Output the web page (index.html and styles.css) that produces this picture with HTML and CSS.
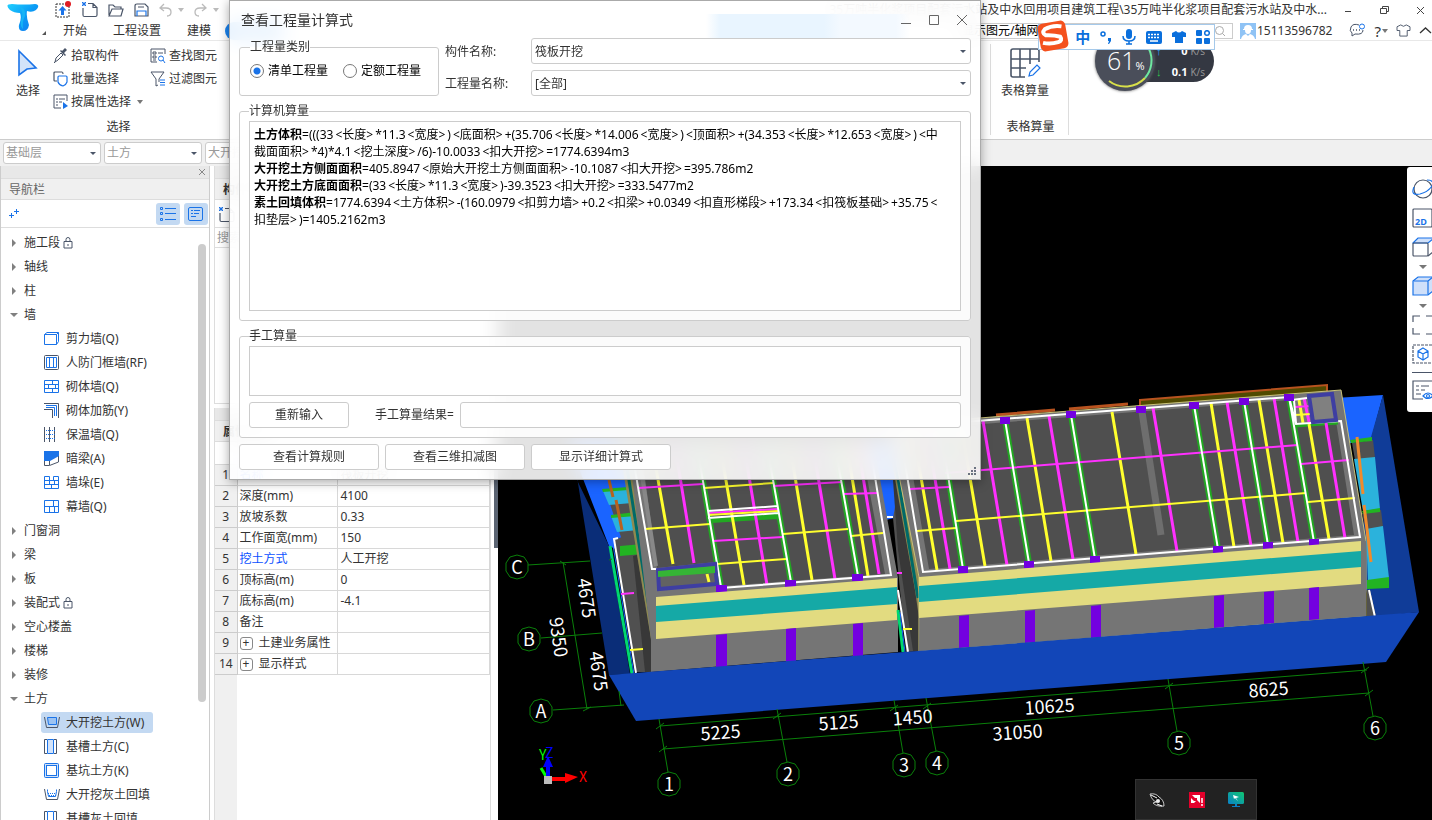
FILE: index.html
```html
<!DOCTYPE html>
<html lang="zh-CN">
<head>
<meta charset="utf-8">
<title>查看工程量计算式</title>
<link rel="stylesheet" href="styles.css">
</head>
<body>
<svg class="defs" aria-hidden="true">
  <symbol id="lock" viewBox="0 0 10 12"><path d="M1 4.500h8v6.500H1zM3 4.500V2.500a2 2 0 0 1 4 0v2M5 7v2" fill="none" stroke="#4a5568"/></symbol>
  <symbol id="newdoc" viewBox="0 0 16 16"><path d="M6 1.500h5l4 4V13q0 1.500-1.500 1.500h-11Q1 14.500 1 13V6M11 1.500v4h4" fill="none" stroke="#4a5568" stroke-width="1.200"/><path d="M0 0l4 4M4 0L0 4M2 0v4M0 2h4" stroke="#1a73e8"/></symbol>
  <symbol id="bubble" viewBox="-13 -13 26 26"><path d="M0-12L7-10 11-4V4L7 10 0 12-7 10-11 4V-4L-7-10Z" fill="none" stroke="#0a800a"/></symbol>
  <symbol id="shirt" viewBox="0 0 16 14"><path d="M5 1L1 3v4h3v6h8V7h3V3l-4-2Q8 4 5 1z"/></symbol>
</svg>
<div class="app">
  <header class="top">
    <div class="logo">
      <svg width="36" height="36" viewBox="0 0 36 36"><defs><linearGradient id="lg" x1="0" x2="1" y1="0" y2="1"><stop offset="0" stop-color="#20d0ff"/><stop offset=".5" stop-color="#0a9bf5"/><stop offset="1" stop-color="#1478f0"/></linearGradient></defs><path d="M6 5Q18 6 29 5q6 1 1 6-4 3-9 1-1 6 2 14-1 6-6 6t-4-6q3-7 1-12-6 0-10-3Q-2 5 6 5z" fill="url(#lg)"/><path d="M14 8q6 1 5 9-3 5-2 13-3-3-2-8 3-8-1-14z" fill="#17b4f5"/></svg>
      <i class="corner"></i>
    </div>
    <div class="top-main">
      <div class="title-row">
        <div class="quick">
          <button aria-label="升级"><svg width="18" height="18" viewBox="0 0 18 18"><rect x="2" y="3" width="13" height="13" fill="none" stroke="#333" stroke-dasharray="2 1"/><path d="M8.500 5l4 4.500H10V14H7V9.500H4.500z" fill="#1a73e8"/><circle cx="14" cy="3" r="3" fill="#e01b22"/></svg></button>
          <button aria-label="新建"><svg width="16" height="16"><use href="#newdoc"/></svg></button>
          <button aria-label="打开"><svg width="16" height="14" viewBox="0 0 16 14" fill="none" stroke="#4a5568" stroke-width="1.200"><path d="M1 12V2h4l2 2h6v2M1 13L4 6h11l-2 7z"/></svg></button>
          <button aria-label="保存"><svg width="15" height="14" viewBox="0 0 15 14" fill="none" stroke="#4a5568" stroke-width="1.200"><path d="M1 13V3q0-2 2-2h8l3 3v9zM4 4h6"/><path d="M3 13V8h9v5" stroke="#1a73e8"/></svg></button>
          <button class="dim" aria-label="撤销"><svg width="13" height="14" viewBox="0 0 13 14" fill="none" stroke="#bbb" stroke-width="1.300"><path d="M5 1L1 5l4 3M1 5h6q5 0 5 4t-4 4"/></svg><i class="caret"></i></button>
          <button class="dim" aria-label="重做"><svg width="13" height="14" viewBox="0 0 13 14" fill="none" stroke="#bbb" stroke-width="1.300"><path d="M8 1l4 4-4 3M12 5H6Q1 5 1 9t4 4"/></svg><i class="caret"></i></button>
        </div>
        <div class="file-name"><span>35万吨半化浆项目配套污水站及中水回用项目建筑工程\35万吨半化浆项目配套污水站及中水...</span></div>
        <div class="win">
          <button aria-label="最小化"><svg width="9" height="9"><path d="M1 5.500h6" stroke="#444"/></svg></button>
          <button aria-label="还原"><svg width="9" height="9" fill="none" stroke="#444"><path d="M2.500 2.500v-2h6v5h-2M.5 2.500h6v5h-6z"/></svg></button>
          <button aria-label="关闭"><svg width="9" height="9" stroke="#444"><path d="M1 1l7 7M8 1L1 8"/></svg></button>
        </div>
      </div>
      <div class="menu-row">
        <nav class="tabs"><a href="#">开始</a><a href="#">工程设置</a><a href="#">建模</a><a href="#" class="on" aria-label="工程量"></a></nav>
        <div class="find"><input aria-label="搜索" value="显示图元/轴网右键"><svg width="12" height="12" viewBox="0 0 12 12" fill="none" stroke="#aaa"><circle cx="5.500" cy="5.500" r="4"/><path d="M8.500 8.500L11 11"/></svg></div>
        <div class="user"><svg width="16" height="16" viewBox="0 0 16 16"><path fill="#8fc3f5" d="M0 0h16v16H0z"/><path fill="#fff" d="M4 6q0-4 4-4t4 4h1v1H3V6zM5 7h6q0 4-3 4T5 7zM1 16q1-4 5-5l2 2 2-2q4 1 5 5z"/></svg>15113596782</div>
        <div class="tools">
          <button aria-label="消息"><svg width="17" height="15" viewBox="0 0 17 15" fill="none" stroke="#4a5568"><path d="M10 2Q4 0 2 4q-2 4 1 6v3l3-2q8 1 8-4"/><path d="M4 7h1M7 7h1M10 7h1" stroke-width="1.500"/><circle cx="13" cy="3.500" r="2.500" stroke="#1a73e8"/></svg></button>
          <button aria-label="帮助">?<i class="caret"></i></button>
          <button aria-label="皮肤"><svg width="15" height="13" fill="none" stroke="#4a5568"><use href="#shirt"/></svg></button>
          <button aria-label="收起"><svg width="13" height="9" fill="none" stroke="#333" stroke-width="1.300"><path d="M1 7l5.500-5L12 7"/></svg></button>
        </div>
      </div>
    </div>
  </header>

  <section class="ribbon">
    <div class="group first">
      <div class="group-body">
        <button class="big"><svg width="22" height="28" viewBox="0 0 22 28"><path d="M2 2l17 17-9 1-8 6z" fill="#d3e3f9" stroke="#1a73e8" stroke-width="1.600"/></svg>选择</button>
        <div class="stack">
          <button><svg width="15" height="16" viewBox="0 0 15 16"><path d="M2 14l1-4 5-5 2 2-5 5zM1 15l1-1" fill="none" stroke="#4a5568"/><path d="M7 3l5 5 1-1-2-2 3-3-2-2-3 3-1-1z" fill="#4a5568"/></svg>拾取构件</button>
          <button><svg width="15" height="16" viewBox="0 0 15 16" fill="none" stroke-width="1.200"><path d="M4 10H2Q1 10 1 9V2q0-1 1-1h7q1 0 1 2" stroke="#4a5568"/><path d="M5 6q0-1 1-1h7q1 0 1 1v5q-1 3-4 4-4-1-5-4z" stroke="#1a73e8"/></svg>批量选择</button>
          <button><svg width="15" height="16" viewBox="0 0 15 16" fill="none" stroke="#4a5568"><path d="M8 14H1V1h13v6M3 5h2M6 5h6M3 8h2M6 8h3M3 11h2"/><path d="M10 8l5 4-5 3z" fill="#1a73e8" stroke="none"/></svg>按属性选择<i class="caret"></i></button>
        </div>
        <div class="stack">
          <button><svg width="16" height="16" viewBox="0 0 16 16" fill="none" stroke="#4a5568"><path d="M7 14H1V1h14v5M3 4h3v2H3zM8 5h5M3 8h3v2H3zM3 12h3"/><g stroke="#1a73e8"><circle cx="11" cy="10.500" r="2.500"/><path d="M13 12l2 3"/></g></svg>查找图元</button>
          <button><svg width="16" height="16" viewBox="0 0 16 16" fill="none" stroke="#4a5568"><path d="M1 1h13L9 8v3M1 1l5 7v7l2-1"/><path d="M10 9h5M10 11.500h5M10 14h5" stroke="#1a73e8"/></svg>过滤图元</button>
        </div>
      </div>
      <p>选择</p>
    </div>
    <div class="group table-calc">
      <button class="big"><svg width="32" height="32" viewBox="0 0 32 32" fill="none" stroke="#4a5568" stroke-width="1.600"><path d="M16 30H4q-2 0-2-2V4q0-2 2-2h24q2 0 2 2v11M2 12h28M2 21h15M11 2v28M21 2v15"/><path d="M20 29l1-4 7-7 3 3-7 7z" stroke="#1a73e8" stroke-width="1.200"/></svg>表格算量</button>
      <p>表格算量</p>
    </div>
  </section>

  <section class="filters">
    <label class="combo"><select aria-label="楼层"><option>基础层</option></select></label>
    <label class="combo"><select aria-label="类别"><option>土方</option></select></label>
    <label class="combo"><select aria-label="构件类型"><option>大开挖土方</option></select></label>
  </section>

  <main class="work">
    <aside class="nav">
      <div class="strip"><button aria-label="关闭导航栏"><svg width="8" height="8" stroke="#888"><path d="M1 1l6 6M7 1L1 7"/></svg></button></div>
      <h2>导航栏</h2>
      <div class="nav-tools">
        <button aria-label="展开"><svg width="10" height="11" stroke="#1a73e8"><path d="M0 7.500h5M2.500 5v5M5 3.500h5M7.500 1v5"/></svg></button>
        <button class="chip" aria-label="列表"><svg width="16" height="14" viewBox="0 0 16 14" stroke="#1a73e8" fill="none"><path d="M5 1.500h11M5 6.500h11M5 12.500h11M.5.5h2v2h-2zM.5 5.500h2v2h-2zM.5 11.500h2v2h-2z"/></svg></button>
        <button class="chip" aria-label="详情"><svg width="16" height="14" viewBox="0 0 16 14" stroke="#1a73e8" fill="none"><rect x=".5" y=".5" width="14" height="13" rx="1.500"/><path d="M3 3.500h2M6 3.500h6M3 6.500h2M6 6.500h5M3 9.500h5"/></svg></button>
      </div>
      <ul class="tree">
        <li><button><i></i>施工段<svg class="lk"><use href="#lock"/></svg></button></li>
        <li><button><i></i>轴线</button></li>
        <li><button><i></i>柱</button></li>
        <li><button class="open"><i></i>墙</button>
          <ul>
            <li><button><svg viewBox="0 0 16 16"><path d="M.5 3.500h12v10H.5zM.5 3.500L3 1.500h11.500v9l-2 3M12.500 3.500l2-2" class="b"/></svg>剪力墙(Q)</button></li>
            <li><button><svg viewBox="0 0 16 16"><rect x=".5" y=".5" width="14" height="14" rx="1" class="g"/><path d="M2.500 2.500h10v10h-10zM5.500 2.500v10M9.500 2.500v10" class="b"/></svg>人防门框墙(RF)</button></li>
            <li><button><svg viewBox="0 0 16 16"><path d="M.5 1.500h14v12H.5zM.5 5.500h14M.5 9.500h14M8.500 1.500v4M4.500 5.500v4M11.500 5.500v4M8.500 9.500v4" class="b"/></svg>砌体墙(Q)</button></li>
            <li><button><svg viewBox="0 0 16 16"><path d="M0 .5h14.500V15M0 6.500h8.500V15" class="g"/><path d="M2 2.500h10.500V13M2 4.500h8.500V13" class="b"/></svg>砌体加筋(Y)</button></li>
            <li><button><svg viewBox="0 0 16 16"><path d="M.5 0v15M5.500 0v15M10.500 0v15" class="g"/><path d="M2 3.500h9M2 7.500h9M2 11.500h9" class="b" stroke-dasharray="1 1"/></svg>保温墙(Q)</button></li>
            <li><button><svg viewBox="0 0 16 16"><path d="M.5 10v4.500h5l9-3.500V5M5.500 10v4" class="g"/><path d="M0 0h15v5l-9 5H0z" fill="#1a73e8"/></svg>暗梁(A)</button></li>
            <li><button><svg viewBox="0 0 16 16"><path d="M.5 1.500h5v4h4v-4h5v12H.5zM.5 5.500h14M.5 9.500h14M5.500 5.500v4M10.500 5.500v4M7.500 9.500v4" class="b"/></svg>墙垛(E)</button></li>
            <li><button><svg viewBox="0 0 16 16"><path d="M.5 1.500h14v12H.5zM.5 7.500h14M9.500 1.500v6M5.500 7.500v6M10.500 7.500v6" class="b"/></svg>幕墙(Q)</button></li>
          </ul>
        </li>
        <li><button><i></i>门窗洞</button></li>
        <li><button><i></i>梁</button></li>
        <li><button><i></i>板</button></li>
        <li><button><i></i>装配式<svg class="lk"><use href="#lock"/></svg></button></li>
        <li><button><i></i>空心楼盖</button></li>
        <li><button><i></i>楼梯</button></li>
        <li><button><i></i>装修</button></li>
        <li><button class="open"><i></i>土方</button>
          <ul>
            <li><button class="sel"><svg viewBox="0 0 16 16"><path d="M.5 2l2 10.500h11L15.500 2" class="g"/><path d="M3.500 2.500h9v7h-8z" class="b fill"/></svg>大开挖土方(W)</button></li>
            <li><button><svg viewBox="0 0 16 16"><path d="M3 .5H.5v14H3M10 .5h2.500v14H10" class="g"/><path d="M3.500.5h6v14h-6z" class="b light"/></svg>基槽土方(C)</button></li>
            <li><button><svg viewBox="0 0 16 16"><rect x=".5" y=".5" width="14" height="14" rx="1" class="b light"/><rect x="2.500" y="2.500" width="10" height="10" class="b white"/></svg>基坑土方(K)</button></li>
            <li><button><svg viewBox="0 0 16 16"><path d="M.5 2l2 10.500h11L15.500 2" class="g"/><path d="M3.500 2.500v2l1 5h7l1-5v-2" class="b"/><path d="M4 6.500h8M5 8.500h7" class="b" stroke-dasharray="1 1"/></svg>大开挖灰土回填</button></li>
            <li><button><svg viewBox="0 0 16 16"><path d="M3 .5H.5v14H3M10 .5h2.500v14H10" class="g"/><path d="M3.500.5h6v14h-6z" class="b"/></svg>基槽灰土回填</button></li>
          </ul>
        </li>
      </ul>
      <span class="thumb"></span>
    </aside>

    <aside class="props">
      <div class="list">
        <div class="strip"></div>
        <h2>构件列表</h2>
        <div class="list-tools"><svg width="16" height="16"><use href="#newdoc"/></svg></div>
        <input class="seek" type="text" aria-label="搜索构件" placeholder="搜索构件...">
      </div>
      <div class="attrs">
        <div class="strip"></div>
        <h2>属性列表</h2>
        <table>
          <colgroup><col class="c-num"><col class="c-name"><col></colgroup>
          <tbody>
            <tr class="blank"><td></td><td></td><td></td></tr>
            <tr><th>1</th><td class="key">名称</td><td>筏板开挖</td></tr>
            <tr><th>2</th><td>深度(mm)</td><td>4100</td></tr>
            <tr><th>3</th><td>放坡系数</td><td>0.33</td></tr>
            <tr><th>4</th><td>工作面宽(mm)</td><td>150</td></tr>
            <tr><th>5</th><td class="key">挖土方式</td><td>人工开挖</td></tr>
            <tr><th>6</th><td>顶标高(m)</td><td>0</td></tr>
            <tr><th>7</th><td>底标高(m)</td><td>-4.1</td></tr>
            <tr><th>8</th><td>备注</td><td></td></tr>
            <tr><th>9</th><td><button class="plus">+</button>土建业务属性</td><td></td></tr>
            <tr><th>14</th><td><button class="plus">+</button>显示样式</td><td></td></tr>
          </tbody>
        </table>
      </div>
    </aside>
    <div class="split"><i></i></div>

    <section class="view">
      <svg class="scene" viewBox="498 166 934 654" preserveAspectRatio="xMinYMin slice">
        <!-- excavation pit -->
        <path fill="#1a64ff" d="M568 440H900L898 517 886 520 640 560 609 546zM1335 398L1383 395 1371 440 1345 444z"/>
        <path fill="#0a2d78" d="M571 440L577 480 609 546 630 674 609 675z"/>
        <path fill="#103c98" d="M1383 395L1419 612 1372 617 1360 560 1371 437z"/>
        <!-- left yard -->
        <path fill="#505050" d="M614 540L640 530 646 540 651 560V672H635zM610 504L633 502 640 545 622 540z"/>
        <path d="M610 546L632 674" stroke="#00d870" stroke-width="3"/><path d="M613 545L634 674" stroke="#1a64ff" stroke-width="1"/>
        <path d="M618 538l-4 1L636 673" fill="none" stroke="#fff" stroke-width="2"/>
        <path fill="#2bb2dc" d="M603 491l26-2 3 14-23 2zM611 516l25-3 3 17-22 2z"/>
        <path fill="#22b422" d="M602 489l26-2v3l-25 2zM611 515l25-3v4l-25 2zM620 546l23-2v10l-23 2z"/>
        <path d="M609 480l4 17M616 500l6 30" stroke="#b8621f" stroke-width="3"/>
        <path fill="#383838" d="M633 556L637 555 651 638V672H645z"/>
        <path d="M621 594l13-1" stroke="#f3f" stroke-width="2"/><path d="M630 650l13-1" stroke="#ff3" stroke-width="2"/>
        <path fill="#8f8a50" d="M618 440H632L656 596 651 639z"/>
        <path d="M625 455L651 620" stroke="#006a68" stroke-width="3"/><path d="M630 455L653 600" stroke="#e2db80" stroke-width="1"/>
        <!-- left building -->
        <path fill="#757575" d="M628 440H873L898 578V652L651 672V640z"/>
        <path fill="#4f4f4f" d="M640 440H860L885 574 723 586 716 562 657 568z"/>
        <path fill="none" stroke="#888" stroke-width="4" d="M638 450L656 566"/>
        <g fill="none" stroke="#22a822" stroke-width="6"><path d="M696 440L721 587M766 440L791 582M834 440L858 576M711 520L777 516"/></g>
        <g fill="none" stroke="#ffff2e" stroke-width="3"><path d="M651 440L673 564M719 440L744 585M789 440L812 580M846 440L868 576"/></g>
        <g fill="none" stroke="#ff30ff" stroke-width="3"><path d="M674 440L694 563M743 440L767 585M812 440L835 579M857 440L879 574"/></g>
        <g fill="none" stroke="#ff30ff" stroke-width="2"><path d="M638 488L703 484M773 486L842 482M843 494L878 493M713 541L783 537M708 513L778 509"/></g>
        <g fill="none" stroke="#ffff2e" stroke-width="2"><path d="M704 488L773 483M645 529L710 524M717 564L786 559M783 534L848 529M851 536L883 533M708 515L778 511"/></g>
        <g fill="none" stroke="#fff" stroke-width="2"><path d="M696 440L721 587M766 440L791 582M834 440L858 576M708 511L778 506M708 518L778 513M630 440L652 569H658M869 440L891 575 721 588"/></g>
        <path d="M658 570L715 564 717 584 659 589z" fill="#626262" stroke="#3e3ea2" stroke-width="4"/><path fill="#35b535" d="M658 571l57-5v7l-57 4z"/><path d="M707 574l2 8" stroke="#ff3" stroke-width="3"/>
        <path fill="#7300e0" d="M716 585h11v7h-11zM785 580h11v7h-11zM852 574h11v7h-11z"/>
        <path fill="#e2db80" d="M656 597L897 578V620L656 639z"/><path fill="#15a9a6" d="M656 606L897 587V604L656 622z"/>
        <path fill="#7300e0" d="M716 635l11-1v33l-11 1zM786 629l10-1v33l-10 1zM853 624l10-1v33l-10 1z"/>
        <!-- passage between buildings -->
        <path fill="#505050" d="M893 518L900 480 919 620V651L906 652z"/><path fill="#383838" d="M893 480H902L919 610V651H913L898 550z"/>
        <path d="M898 610L903 652" stroke="#00d870" stroke-width="3"/><path d="M900 612L905 652" stroke="#1a64ff"/><path d="M898 590L908 652M887 517L893 517" stroke="#fff" stroke-width="2"/>
        <path fill="#8f8a50" d="M888 440H899L919 577V618L915 590z"/><path d="M895 460L918 598" stroke="#006a68" stroke-width="3"/>
        <path d="M897 573h5" stroke="#f3f" stroke-width="2"/><path d="M903 629h9" stroke="#ff3" stroke-width="2"/>
        <!-- right building -->
        <path fill="none" stroke="#b8531f" stroke-width="3" d="M996 415L1055 410M1069 409L1128 404"/>
        <path fill="#504a00" stroke="#b8531f" stroke-width="2" d="M1140 400L1327 385V396L1140 408z"/>
        <path fill="#757575" stroke="#c8c27a" d="M889 425L1341 390 1366 541V616L919 651V577z"/>
        <path fill="#757575" d="M920 577L1361 542 1366 541V616L919 651z"/>
        <path fill="#4f4f4f" d="M905 430L1289 400 1295 424 1336 421 1354 535 929 569z"/>
        <path d="M1142 412L1161 535" stroke="#6e6e6e" stroke-width="7"/>
        <g fill="none" stroke="#22a822" stroke-width="6"><path d="M940 425L963 569M1005 420L1029 563M1071 415L1095 559M1194 405L1218 549M1244 401L1268 545M1289 397L1314 542"/></g>
        <path d="M1295 426L1338 423" stroke="#22a822" stroke-width="3"/>
        <g fill="none" stroke="#ffff2e" stroke-width="3"><path d="M912 425L937 570M961 425L985 566M1027 418L1051 561M1112 412L1136 554M1211 403L1234 547M1259 400L1283 543M1309 424L1329 539M1299 400L1303 423"/></g>
        <g fill="none" stroke="#ff30ff" stroke-width="3"><path d="M926 425L950 569M983 421L1007 565M1049 416L1073 559M1153 408L1177 551M1227 402L1251 546M1274 398L1298 542M1326 423L1345 538M1304 398L1309 422"/></g>
        <g fill="none" stroke="#ff30ff" stroke-width="2"><path d="M945 473L1298 445M910 489L949 487M1301 464L1349 460M1295 407L1310 406"/></g>
        <g fill="none" stroke="#ffff2e" stroke-width="2"><path d="M956 521L1306 493M917 531L956 528M1308 502L1355 498M1295 415L1311 414"/></g>
        <g fill="none" stroke="#fff" stroke-width="2"><path d="M940 425L963 569M1005 420L1029 563M1071 415L1095 559M1194 405L1218 549M1244 401L1268 545M1289 397L1314 542M899 427L1289 397 1296 424 1341 421 1360 537 923 572zM1292 400L1307 398M1296 423L1294 400"/></g>
        <path d="M1309 396L1332 394 1336 420 1313 422z" fill="#808080" stroke="#3e3ea2" stroke-width="4"/>
        <g fill="#7300e0"><path d="M1000 417h10v7h-10zM1066 411h10v7h-10zM1136 406h10v7h-10zM1189 402h10v7h-10zM1239 398h10v7h-10zM1284 394h10v7h-10z"/><path d="M958 566h10v7h-10zM1024 561h10v7h-10zM1090 556h10v7h-10zM1213 546h10v7h-10zM1263 542h10v7h-10zM1309 539h10v7h-10z"/></g>
        <path fill="#e2db80" d="M919 577L1361 541V584L919 618z"/><path fill="#15a9a6" d="M919 586L1361 551V567L919 602z"/>
        <path fill="#7300e0" d="M959 616l10-1v32l-10 1zM1025 611l10-1v32l-10 1zM1091 606l10-1v32l-10 1zM1214 596l10-1v32l-10 1zM1264 592l10-1v32l-10 1zM1309 588l10-1v32l-10 1z"/>
        <!-- right yard -->
        <path fill="#505050" d="M1352 443L1373 440 1375 458 1355 460zM1362 513L1381 510 1383 527 1366 530zM1367 590h3l6 26-9 1z"/>
        <path fill="#2bb2dc" d="M1354 459L1375 457 1380 509 1363 511zM1366 529L1383 526 1389 578 1368 581z"/>
        <path fill="#22b422" d="M1350 440l22-3v4l-21 2zM1362 511l18-3v4l-17 2zM1367 580l22-3v11l-22 1z"/>
        <path d="M1357 437L1363 494M1364 505L1371 562" stroke="#f08a2c" stroke-width="3"/><path d="M1369 590L1375 617" stroke="#fff" stroke-width="2"/>
        <path fill="#1246b8" d="M609 675L1419 612 1386 662 636 721z"/>
        <!-- axis grid -->
        <path fill="none" stroke="#0a800a" d="M528 565L590 561M609 560L612 559M541 638L602 633M553 710L624 705M563 562L587 709M619 691L621 706M660 726L1367 670M663 749L1369 693M659 719L668 772M777 709L787 762M894 700L903 753M926 698L936 751M1168 679L1177 731M1363 662L1373 716M560 561l6 4M583 711l8-4M656 729l8-6M773 719l8-6M890 711l8-6M923 709l8-6M1165 689l8-6M1361 673l8-6M659 752l8-6M1365 696l8-6"/>
        <g><use href="#bubble" x="504" y="554" width="26" height="26"/><use href="#bubble" x="516" y="626" width="26" height="26"/><use href="#bubble" x="528" y="698" width="26" height="26"/><use href="#bubble" x="656" y="771" width="26" height="26"/><use href="#bubble" x="775" y="761" width="26" height="26"/><use href="#bubble" x="891" y="752" width="26" height="26"/><use href="#bubble" x="924" y="750" width="26" height="26"/><use href="#bubble" x="1166" y="730" width="26" height="26"/><use href="#bubble" x="1362" y="715" width="26" height="26"/></g>
        <g class="dim-text">
          <text x="517" y="574">C</text><text x="529" y="646">B</text><text x="541" y="718">A</text><text x="669" y="791">1</text><text x="788" y="781">2</text><text x="904" y="772">3</text><text x="937" y="770">4</text><text x="1179" y="750">5</text><text x="1375" y="735">6</text>
          <text transform="translate(721 739) rotate(-4)">5225</text><text transform="translate(839 729) rotate(-4)">5125</text><text transform="translate(913 724) rotate(-4)">1450</text><text transform="translate(1050 713) rotate(-4)">10625</text><text transform="translate(1269 696) rotate(-4)">8625</text><text transform="translate(1018 739) rotate(-4)">31050</text>
          <text transform="translate(580 599) rotate(82)">4675</text><text transform="translate(552 638) rotate(82)">9350</text><text transform="translate(592 672) rotate(82)">4675</text>
        </g>
        <path d="M547 778L541 768" stroke="#0f0" stroke-width="3"/><path d="M551 779h16" stroke="#f00" stroke-width="4"/><path d="M565 773l13 4-13 6z" fill="#f00"/><path d="M548 777v-12" stroke="#00f" stroke-width="4"/><path d="M543 767l5-11 5 11z" fill="#00f"/><path d="M544 776h8v8h-8z" fill="#bbb"/>
        <g class="axis"><text x="579" y="782" fill="#f00">X</text><text x="539" y="760" fill="#0f0">Y</text><text x="545" y="758" fill="#00f">Z</text></g>
      </svg>
      <div class="view-tools">
        <button aria-label="动态观察"><svg width="22" height="20" viewBox="0 0 22 20" fill="none" stroke="#4a5568" stroke-width="1.200"><circle cx="11" cy="10" r="9"/><path d="M2 8q-4 9 6 7 8-2 12-8 3-6-5-6" stroke="#1a73e8"/></svg></button>
        <button aria-label="二维"><svg width="22" height="20" viewBox="0 0 22 20" fill="none" stroke="#4a5568" stroke-width="1.200"><rect x="1" y="1" width="19" height="18" rx="1"/><text x="3" y="17" class="t2d">2D</text></svg></button>
        <button aria-label="俯视"><svg width="22" height="20" viewBox="0 0 22 20" fill="none" stroke="#4a5568" stroke-width="1.200"><path d="M1 6l5-5h16l-6 5z" fill="#cfe0fa" stroke="#1a73e8"/><rect x="1" y="6" width="15" height="13" rx="1"/><path d="M16 19l6-5"/></svg></button><i class="caret"></i>
        <button aria-label="着色"><svg width="22" height="20" viewBox="0 0 22 20" fill="#cfe0fa" stroke="#1a73e8" stroke-width="1.200"><path d="M1 5l5-4h16v13l-6 5H1z"/><path d="M1 5h15v14M16 5l5-4"/></svg></button><i class="caret"></i>
        <button aria-label="全屏"><svg width="22" height="20" viewBox="0 0 22 20" fill="none" stroke="#4a5568" stroke-width="1.200"><path d="M8 1H1v6M14 1h8M1 13v6h7M14 19h8"/></svg></button>
        <button aria-label="局部三维"><svg width="22" height="20" viewBox="0 0 22 20" fill="none" stroke="#4a5568" stroke-width="1.200"><rect x="1" y="1" width="20" height="18" stroke-dasharray="3 1"/><path d="M11 4l5 3v6l-5 3-5-3V7zM6 7l5 3 5-3M11 10v6" stroke="#1a73e8"/></svg></button>
        <hr>
        <button aria-label="显示设置"><svg width="22" height="22" viewBox="0 0 22 22" fill="none" stroke="#4a5568" stroke-width="1.200"><path d="M11 20H1V2h21M4 7h3M9 7h8M4 11h3M9 11h4M4 15h5"/><path d="M11 17q5-6 10 0-5 5-10 0z" stroke="#1a73e8"/><circle cx="16" cy="17" r="1.500" stroke="#1a73e8"/></svg></button>
      </div>
    </section>
  </main>
</div>

<div class="perf">
  <div class="rates"><span><b class="up">↑</b>0<small>K/s</small></span><span><b class="down">↓</b>0.1<small>K/s</small></span></div>
  <div class="dial"><svg width="60" height="60" viewBox="0 0 60 60"><path d="M54 18A27 27 0 0 1 50 47" fill="none" stroke="#6ee8a0" stroke-width="2"/><path d="M50 47A27 27 0 0 1 14 50" fill="none" stroke="#d8e04a" stroke-width="2"/></svg><span>61<small>%</small></span></div>
</div>

<div class="ime">
  <svg class="sogou" width="32" height="32" viewBox="0 0 32 32"><g transform="rotate(-10 16 16)"><rect x="2" y="2" width="28" height="28" rx="5" fill="#f4511e"/><path d="M26 8Q17 5 9 8q-4 3 0 6 8 1 14 4 2 4-3 5-8 1-15-2" fill="none" stroke="#fff" stroke-width="4"/></g></svg>
  <button class="zh">中</button>
  <button aria-label="标点"><svg width="14" height="14"><circle cx="4" cy="4" r="2" fill="none" stroke="#0a6fdc" stroke-width="1.500"/><path d="M9 8h3v3l-2 3H9l1-3H9z" fill="#0a6fdc"/></svg></button>
  <button aria-label="语音"><svg width="14" height="16" fill="#0a6fdc"><rect x="4" y="0" width="6" height="10" rx="3"/><path d="M1 7q0 5 6 5t6-5M7 12v3M4 15h6" fill="none" stroke="#0a6fdc" stroke-width="1.500"/></svg></button>
  <button aria-label="键盘"><svg width="16" height="13"><rect width="16" height="13" rx="2" fill="#0a6fdc"/><path d="M2 3.500h12M2 6.500h12" stroke="#fff" stroke-width="1.500" stroke-dasharray="2 1"/><path d="M4 10h8" stroke="#fff" stroke-width="1.500"/></svg></button>
  <button aria-label="皮肤盒子"><svg width="16" height="14" fill="#0a6fdc"><use href="#shirt"/></svg></button>
  <button aria-label="工具箱"><svg width="14" height="14" fill="#0a6fdc"><rect width="6" height="6" rx="1"/><rect y="8" width="6" height="6" rx="1"/><rect x="8" y="8" width="6" height="6" rx="1"/><circle cx="11" cy="3" r="2.300" fill="none" stroke="#0a6fdc" stroke-width="1.500"/></svg></button>
</div>

<div class="tray">
  <svg width="18" height="18" viewBox="0 0 18 18"><path d="M2 3q6-1 9 3 5 3 5 9-7 1-11-3 2-1 4-1-5-1-7-8z" fill="#111" stroke="#ccc"/><circle cx="10" cy="10" r="2" fill="#eee"/><path d="M3 4l6 3M9 13l5 2" stroke="#fff"/></svg>
  <svg width="16" height="16" viewBox="0 0 16 16"><path fill="#e4002b" d="M0 0h16v16H0z"/><path fill="#fff" d="M3 3h8v8L8 8V6H6zM2 6l3 3h2l-2 2H2z"/><path d="M13 6v5M13 12v2" stroke="#fff" stroke-width="1.500"/></svg>
  <svg width="16" height="16" viewBox="0 0 16 16"><defs><linearGradient id="mg" x1="0" y1="1" x2="1" y2="0"><stop stop-color="#0a80c8"/><stop offset="1" stop-color="#10c870"/></linearGradient></defs><rect width="16" height="12" rx="1.500" fill="url(#mg)"/><path d="M7 12h2v2h3v1H4v-1h3z" fill="#0a80c8"/><path d="M5 3l6 2-3 1 2 3-3-3-1 1z" fill="#fff"/></svg>
</div>

<section class="dialog" role="dialog" aria-labelledby="dlg-title">
  <header>
    <h1 id="dlg-title">查看工程量计算式</h1>
    <button aria-label="最小化"><svg width="12" height="12" stroke="#666"><path d="M1 9.500h10"/></svg></button>
    <button aria-label="最大化"><svg width="12" height="12" stroke="#666" fill="none"><path d="M1.500 1.500h9v9h-9z"/></svg></button>
    <button aria-label="关闭"><svg width="12" height="12" stroke="#666"><path d="M1 1l10 10M11 1L1 11"/></svg></button>
  </header>
  <div class="criteria">
    <fieldset class="kind">
      <legend>工程量类别</legend>
      <label><input type="radio" name="kind" checked>清单工程量</label>
      <label><input type="radio" name="kind">定额工程量</label>
    </fieldset>
    <div class="fields">
      <label for="comp">构件名称:</label><div class="combo"><select id="comp"><option>筏板开挖</option></select></div>
      <label for="qty">工程量名称:</label><div class="combo"><select id="qty"><option>[全部]</option></select></div>
    </div>
  </div>
  <fieldset class="computed">
    <legend>计算机算量</legend>
    <div class="result">
      <p><b>土方体积</b>=(((33<span>&lt;长度&gt;</span>*11.3<span>&lt;宽度&gt;</span>)<span>&lt;底面积&gt;</span>+(35.706<span>&lt;长度&gt;</span>*14.006<span>&lt;宽度&gt;</span>)<span>&lt;顶面积&gt;</span>+(34.353<span>&lt;长度&gt;</span>*12.653<span>&lt;宽度&gt;</span>)<span>&lt;中<br>截面面积&gt;</span>*4)*4.1<span>&lt;挖土深度&gt;</span>/6)-10.0033<span>&lt;扣大开挖&gt;</span>=1774.6394m3</p>
      <p><b>大开挖土方侧面面积</b>=405.8947<span>&lt;原始大开挖土方侧面面积&gt;</span>-10.1087<span>&lt;扣大开挖&gt;</span>=395.786m2</p>
      <p><b>大开挖土方底面面积</b>=(33<span>&lt;长度&gt;</span>*11.3<span>&lt;宽度&gt;</span>)-39.3523<span>&lt;扣大开挖&gt;</span>=333.5477m2</p>
      <p><b>素土回填体积</b>=1774.6394<span>&lt;土方体积&gt;</span>-(160.0979<span>&lt;扣剪力墙&gt;</span>+0.2<span>&lt;扣梁&gt;</span>+0.0349<span>&lt;扣直形梯段&gt;</span>+173.34<span>&lt;扣筏板基础&gt;</span>+35.75<span>&lt;<br>扣垫层&gt;</span>)=1405.2162m3</p>
    </div>
  </fieldset>
  <fieldset class="by-hand">
    <legend>手工算量</legend>
    <textarea aria-label="手工算量"></textarea>
    <div class="manual"><button class="btn">重新输入</button><label for="res">手工算量结果=</label><input id="res" type="text"></div>
  </fieldset>
  <footer><button class="btn">查看计算规则</button><button class="btn">查看三维扣减图</button><button class="btn">显示详细计算式</button></footer>
  <svg class="grip" width="9" height="9" fill="#6b7280"><path d="M6 0h2v2H6zM3 3h2v2H3zM6 3h2v2H6zM0 6h2v2H0zM3 6h2v2H3zM6 6h2v2H6z"/></svg>
</section>
</body>
</html>
```
FILE: styles.css
```css
* { box-sizing: border-box; }
body {
  margin: 0;
  height: 100vh;
  overflow: hidden;
  position: relative;
  font: 12px/16px "Noto Sans", "Noto Sans CJK SC", sans-serif;
  color: #333;
  background: #fff;
}
button, input, select, textarea { font: inherit; color: inherit; }
button { background: none; border: 0; padding: 0; display: flex; align-items: center; }
h1, h2, p, ul { margin: 0; padding: 0; font-weight: normal; }
ul { list-style: none; }
a { color: inherit; text-decoration: none; }
svg { flex: none; display: block; }
.defs { position: absolute; width: 0; height: 0; }
.caret { border: 3px solid transparent; border-top: 4px solid #777; border-bottom: 0; width: 6px; }
.app { height: 100%; display: flex; flex-direction: column; }

/* title and menu */
.top { display: flex; height: 41px; border-bottom: 1px solid #e8e8e8; }
.logo { width: 46px; display: flex; align-items: flex-end; padding: 0 0 5px 6px; }
.corner { border-left: 4px solid transparent; border-bottom: 4px solid #555; }
.top-main { flex: 1; min-width: 0; display: flex; flex-direction: column; }
.title-row { display: flex; height: 21px; align-items: center; }
.quick { display: flex; gap: 10px; padding-left: 8px; }
.quick .dim { gap: 6px; }
.quick .caret { border-top-color: #bbb; }
.file-name { flex: 1; min-width: 0; display: flex; justify-content: flex-end; overflow: hidden; white-space: nowrap; }
.win { display: flex; gap: 27px; padding: 0 7px 0 17px; }
.menu-row { display: flex; height: 20px; padding-top: 1px; align-items: center; }
.tabs { flex: 1; display: flex; gap: 26px; padding-left: 17px; align-items: center; }
.tabs .on { width: 60px; height: 18px; border-radius: 9px; background: #1a84f0; margin-left: -12px; }
.find { display: flex; align-items: center; border: 1px solid #ccc; height: 16px; width: 272px; padding-right: 6px; }
.find input { border: 0; flex: 1; min-width: 0; height: 14px; padding: 0; outline: 0; color: #000; }
.user { display: flex; align-items: center; gap: 1px; padding-left: 7px; }
.tools { display: flex; align-items: center; gap: 8px; padding-left: 17px; }
.tools button { font-size: 15px; gap: 1px; }

/* ribbon */
.ribbon { display: flex; justify-content: space-between; height: 98px; }
.group { display: flex; flex-direction: column; justify-content: space-between; padding-bottom: 4px; }
.group p { text-align: center; }
.group-body { display: flex; padding: 4px 20px 0 16px; }
.big { flex-direction: column; gap: 6px; }
.first .big { padding-top: 4px; align-self: flex-start; }
.stack { display: flex; flex-direction: column; gap: 7px; padding: 3px 0 0 13px; }
.stack + .stack { padding-left: 7px; }
.stack button { gap: 3px; height: 16px; }
.stack .caret { margin-left: 3px; }
.table-calc { margin: 3px 363px 4px 0; width: 79px; border: solid #ddd; border-width: 0 1px; padding-bottom: 0; }
.table-calc .big { padding: 3px 8px 0 10px; gap: 4px; align-self: flex-start; }
.table-calc p { padding: 0 0 0 2px; }

.filters { display: flex; gap: 3px; height: 27px; padding: 2px 3px; background: #f0f0f0; border-top: 1px solid #ccc; }
.combo { position: relative; }
.combo::after { content: ""; position: absolute; right: 5px; top: 12px; border: 3px solid transparent; border-top: 3px solid #4a5568; border-bottom: 0; }
.combo select { appearance: none; width: 100%; height: 100%; background: #fff; border: 1px solid #ccc; border-radius: 3px; padding: 0 16px 0 3px; }
.filters .combo { width: 98px; }
.filters .combo::after { top: 10px; }
.filters select { color: #999; padding-left: 2px; }

/* panels */
.work { flex: 1; min-height: 0; display: flex; }
.strip { height: 12px; background: #e8e8e8; display: flex; justify-content: flex-end; align-items: center; padding-right: 3px; }
h2 { font-size: 12px; height: 22px; line-height: 21px; background: #f0f0f0; padding-left: 8px; color: #666; border: solid #ddd; border-width: 1px 0; }
.nav { width: 210px; border: solid #ccc; border-width: 0 1px; position: relative; overflow: hidden; }
.nav-tools { display: flex; align-items: center; gap: 4px; height: 28px; border-bottom: 1px solid #ddd; padding: 0 1px 0 8px; }
.nav-tools button:first-child { margin-right: auto; }
.chip { width: 24px; height: 22px; justify-content: center; background: #c3d9f2; border-radius: 3px; }
.tree { padding-top: 3px; }
.tree button { height: 24px; padding-left: 9px; width: auto; }
.tree i { width: 14px; }
.tree i::before { content: ""; display: block; width: 0; border: 4px solid transparent; border-left: 4px solid #808080; border-right: 0; margin-left: 2px; }
.tree .open i::before { border: 4px solid transparent; border-top: 4px solid #808080; border-bottom: 0; margin-left: 0; }
.tree .lk { width: 10px; height: 12px; margin-left: 3px; }
.tree ul button { height: 21px; margin: 0 0 3px 40px; padding: 0 9px 0 3px; gap: 6px; border-radius: 3px; }
.tree ul { padding-top: 1px; margin-bottom: -1px; }
.tree ul svg { width: 16px; height: 16px; fill: none; }
.tree .b { stroke: #1a73e8; }
.tree .g { stroke: #4a5568; }
.tree .fill { fill: #9cc3f2; }
.tree .light { fill: #d3e3f9; }
.tree .white { fill: #fff; }
.tree .sel { background: #c3d9f2; }
.thumb { position: absolute; right: 3px; top: 12%; height: 70%; width: 8px; border-radius: 4px; background: #ccc; }

.props { width: 277px; margin-left: 4px; display: flex; flex-direction: column; gap: 4px; border-right: 1px solid #ddd; }
.props h2 { font-weight: bold; color: #333; }
.list { height: 238px; border: solid #ddd; border-width: 0 0 1px 1px; }
.list-tools { height: 28px; padding: 7px 4px; border-bottom: 1px solid #ddd; }
.seek { width: 100%; height: 20px; border: 0; border-bottom: 1px solid #ddd; padding: 0 2px; }
.seek::placeholder { color: #999; }
.attrs { flex: 1; border-left: 1px solid #ddd; background: linear-gradient(90deg, #f0f0f0 22px, #fff 22px); }
.attrs table { width: 100%; table-layout: fixed; border-collapse: collapse; }
.c-num { width: 22px; }
.c-name { width: 100px; }
.attrs th, .attrs td { height: 21px; padding: 1px 2px 0; border: solid #d8d8d8; border-width: 0 1px 1px 0; text-align: left; line-height: 16px; background: #fff; white-space: nowrap; }
.attrs th { text-align: center; font-weight: normal; padding: 1px 0 0; background: #f0f0f0; border-color: #ccc; }
.attrs td:last-child { padding-left: 3px; }
.attrs .blank td { height: 22px; }
.attrs .key { color: #0a50ff; }
.plus { display: inline-flex; justify-content: center; width: 13px; height: 13px; border: 1px solid #888; border-radius: 3px; margin: 0 6px 0 0; line-height: 10px; vertical-align: 0; }
.split { width: 7px; display: flex; justify-content: flex-end; }
.split i { width: 4px; height: 116px; margin-top: 266px; background: #5b6472; }

/* model view */
.view { flex: 1; min-width: 0; background: #000; position: relative; overflow: hidden; }
.scene { width: 100%; height: 100%; }
.dim-text { font: 18px "Noto Sans CJK SC", sans-serif; fill: #fff; text-anchor: middle; }
.axis { font: 14px "Noto Sans CJK SC", sans-serif; }
.view-tools { position: absolute; right: 0; top: 1px; width: 25px; overflow: hidden; background: #fff; border-radius: 3px 0 0 3px; display: flex; flex-direction: column; align-items: flex-start; gap: 9px; padding: 12px 0 11px 5px; }
.view-tools .caret { border-width: 4px 4px 0; width: 8px; margin: -1px 0 -2px 7px; }
.view-tools hr { width: 100%; border: 0; border-top: 1px solid #4a5568; margin: -1px 0 -3px; }
.t2d { font: bold 9px "Open Sans", sans-serif; fill: #1a73e8; stroke: none; }

/* floating tools */
.perf { position: absolute; right: 218px; top: 31px; width: 119px; height: 60px; color: #fff; }
.rates { position: absolute; right: 0; top: 9px; width: 90px; height: 42px; background: #343842; border-radius: 0 21px 21px 0; padding-right: 9px; overflow: hidden; }
.rates span { display: flex; justify-content: flex-end; align-items: center; gap: 3px; height: 21px; font: bold 11px "Open Sans", sans-serif; }
.rates b { margin-right: auto; padding-left: 32px; }
.rates small { font-weight: normal; font-size: 10px; color: #999; }
.up { color: #2aa8ff; }
.down { color: #2dc84d; }
.dial { position: absolute; left: 0; top: 0; width: 60px; height: 60px; border-radius: 50%; background: #4a4e5a; box-shadow: 0 0 3px #555; }
.dial span { position: absolute; inset: 13px 0 0 12px; font: 300 25px/32px "Open Sans", sans-serif; }
.dial small { font-size: 11px; font-weight: 400; }
.ime { position: absolute; right: 217px; top: 24px; height: 26px; width: 177px; display: flex; align-items: center; justify-content: space-between; padding: 0 4px 0 0; background: #fff; border: 1px solid #a5c9ea; }
.sogou { margin: -3px -3px 0 -2px; }
.zh { font-weight: bold; font-size: 15px; color: #0a6fdc; }
.tray { position: absolute; right: 175px; bottom: 0; width: 122px; height: 41px; background: #222; border: 1px solid #333; display: flex; align-items: center; justify-content: space-around; }

/* dialog */
.dialog {
  position: absolute; left: 229px; top: 0; width: 752px;
  padding: 0 9px 9px;
  border: 1px solid #aaa;
  background:
    linear-gradient(90deg, transparent, #e9f5ff 14px, #e9f5ff 118px, #f3f9ff 134px, #f3f9ff 190px, transparent) 476px 13px / 204px 25px no-repeat,
    rgba(255, 255, 255, .89);
  backdrop-filter: blur(10px);
  box-shadow: 0 2px 10px rgba(0, 0, 0, .35);
}
.dialog header { display: flex; align-items: center; gap: 16px; height: 37px; padding-right: 3px; }
.dialog h1 { flex: 1; font-size: 14px; padding-left: 2px; }
.dialog header button { width: 12px; }
.dialog fieldset { margin: 0; padding: 2px 9px 9px; border: 1px solid #ccc; border-radius: 3px; background: rgba(255, 255, 255, .85); min-width: 0; }
.dialog .computed { margin-bottom: 7px; }
.dialog .by-hand { margin-bottom: 6px; }
.dialog legend { padding: 0; height: 16px; }
.criteria { display: flex; gap: 6px; margin-bottom: 7px; }
.dialog .kind { display: flex; gap: 15px; width: 200px; height: 57px; margin-top: 1px; padding: 8px 10px; }
.kind label { display: flex; align-items: center; gap: 4px; height: 16px; color: #000; white-space: nowrap; }
.kind input { appearance: none; width: 14px; height: 14px; margin: 0; border: 1px solid #777; border-radius: 50%; background: #fff; }
.kind input:checked { border-color: #777; background: radial-gradient(circle, #1a73e8 3px, #fff 4px); }
.fields { flex: 1; display: grid; grid-template-columns: 86px 1fr; grid-auto-rows: 26px; row-gap: 6px; align-items: center; }
.fields label { padding-top: 2px; }
.fields .combo { height: 26px; }
.fields select { padding-top: 2px; }
.result { height: 190px; border: 1px solid #ccc; background: #fff; padding: 4px; line-height: 17px; color: #000; white-space: nowrap; }
.result span { padding: 0 2px; }
.dialog textarea { display: block; width: 100%; height: 50px; border: 1px solid #ccc; resize: none; }
.manual { display: flex; align-items: center; gap: 6px; margin-top: 6px; }
.manual .btn { width: 100px; margin-right: 20px; }
.manual input { flex: 1; height: 26px; border: 1px solid #ccc; border-radius: 3px; }
.btn { width: 140px; height: 26px; justify-content: center; background: #fff; border: 1px solid #ccc; border-radius: 3px; }
.dialog footer { display: flex; gap: 6px; }
.grip { position: absolute; right: 3px; bottom: 3px; }
```
